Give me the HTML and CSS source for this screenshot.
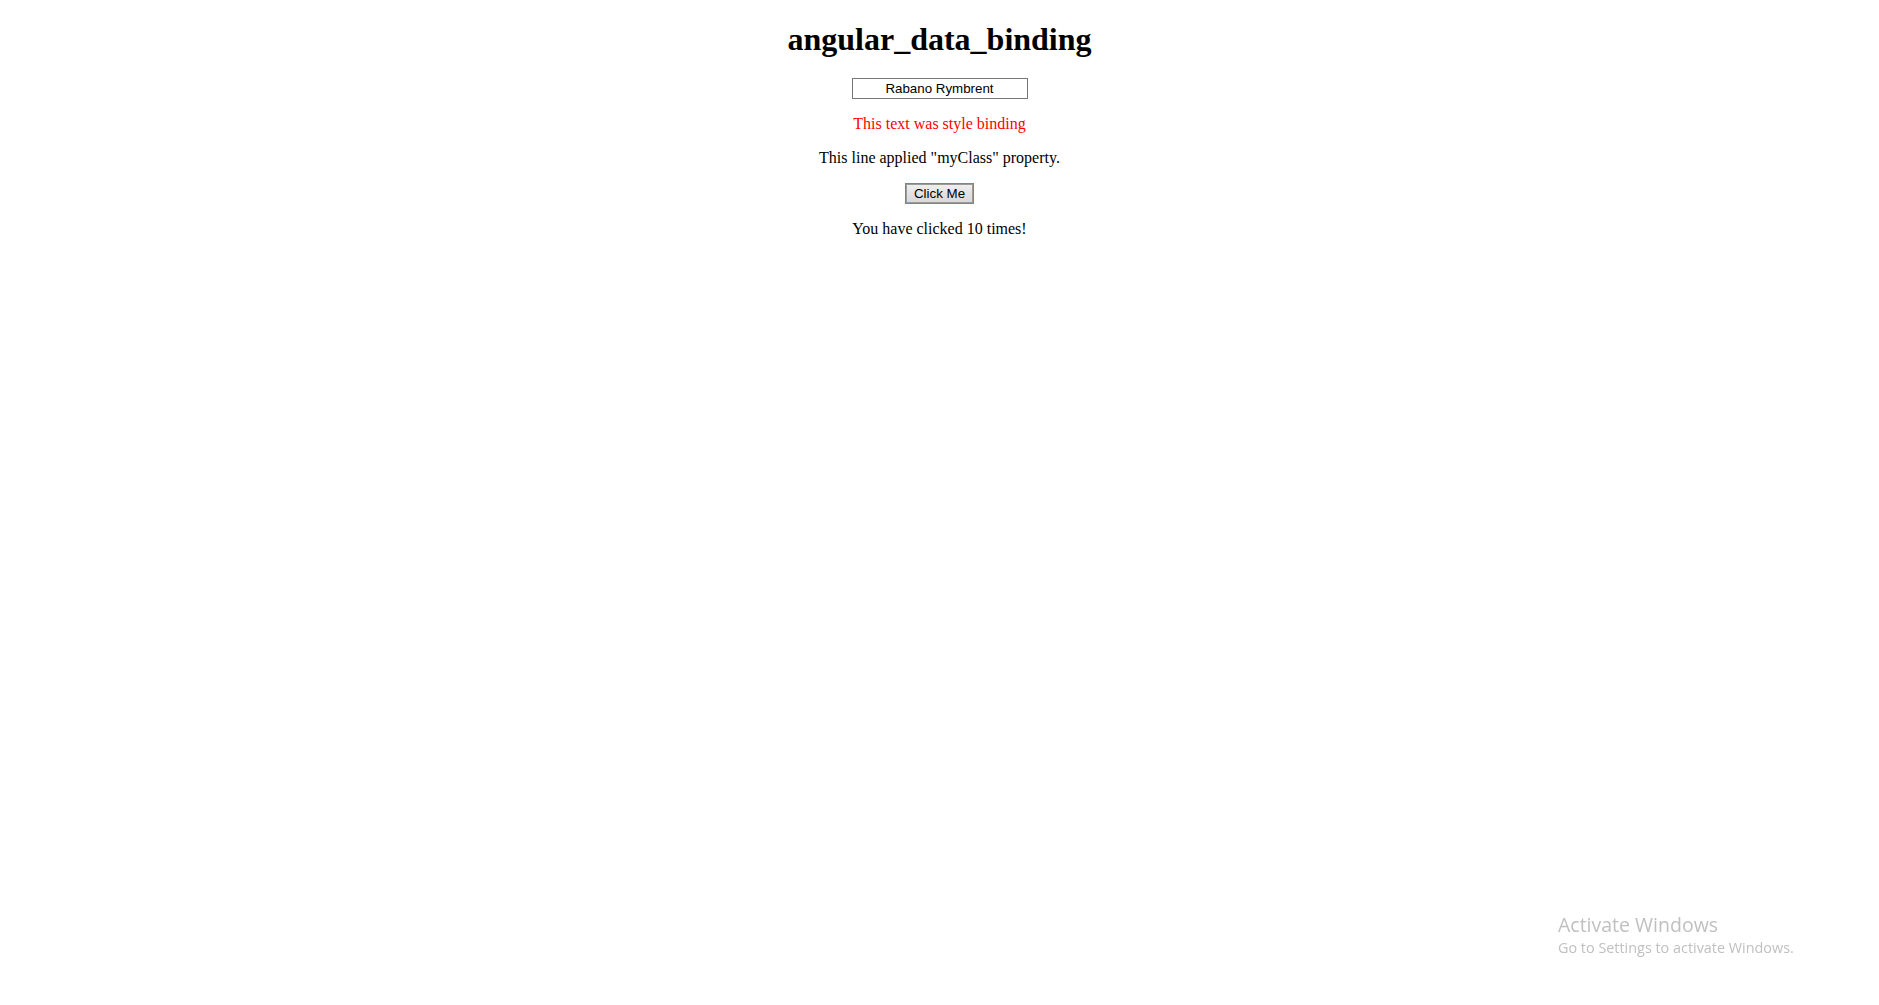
FILE: index.html
```html
<!DOCTYPE html>
<html>
<head>
<meta charset="utf-8">
<title>angular_data_binding</title>
<link rel="stylesheet" href="styles.css">
</head>
<body>
<div class="app">
  <h1 class="title">angular_data_binding</h1>
  <div class="field-row"><input class="name-input" type="text" value="Rabano Rymbrent"></div>
  <p class="styled">This text was style binding</p>
  <p class="myClass">This line applied "myClass" property.</p>
  <p class="btn-row"><button class="click-btn">Click Me</button></p>
  <p class="count">You have clicked 10 times!</p>
</div>
<div class="watermark">
  <div class="wm-title">Activate Windows</div>
  <div class="wm-sub">Go to Settings to activate Windows.</div>
</div>
</body>
</html>
```

FILE: styles.css
```css
html, body {
  background: #ffffff;
}
body {
  margin: 0 8px;
  font-family: "Liberation Serif", "Times New Roman", serif;
  font-size: 16px;
  color: #000;
}
.app {
  text-align: center;
}
.title {
  font-size: 32px;
  font-weight: bold;
  margin: 21px 0 20px;
  line-height: 37px;
}
.field-row {
  height: 21px;
  line-height: 21px;
  margin-bottom: 1px;
}
.name-input {
  box-sizing: border-box;
  width: 176px;
  height: 21px;
  border: 1px solid #767676;
  padding: 0 2px;
  margin: 0;
  font-family: "Liberation Sans", Arial, sans-serif;
  font-size: 13.33px;
  color: #000;
  text-align: center;
  vertical-align: top;
  background: #fff;
  outline: none;
}
p {
  margin: 16px 0;
  line-height: 18px;
}
.styled {
  color: #ff0000;
}
.btn-row {
  height: 21px;
  line-height: 21px;
}
.click-btn {
  box-sizing: border-box;
  height: 21px;
  width: 69px;
  padding: 0;
  margin: 0;
  font-family: "Liberation Sans", Arial, sans-serif;
  font-size: 13.33px;
  color: #000;
  border: 1px solid #3a98d4;
  box-shadow: inset 0 0 0 1px #9a9a9a;
  background: linear-gradient(#f0f0f0, #e2e2e2 50%, #d8d8d8);
  vertical-align: top;
}
.watermark {
  position: fixed;
  left: 1558px;
  top: 912px;
  font-family: "Open Sans", "Noto Sans", sans-serif;
  color: #c0c0c0;
}
.wm-title {
  font-size: 19.5px;
  line-height: 26px;
}
.wm-sub {
  font-size: 14.4px;
  line-height: 19px;
}
```
